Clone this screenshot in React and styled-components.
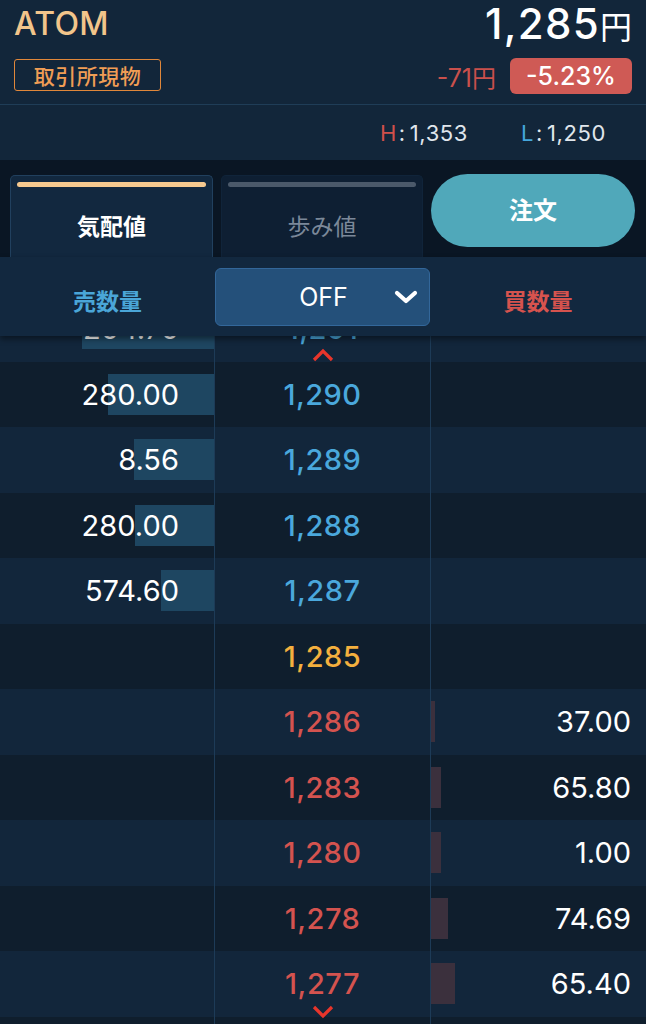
import React from "react";
import styled, { createGlobalStyle } from "styled-components";

const GlobalStyle = createGlobalStyle`
  html, body {
    margin: 0;
    padding: 0;
    background: #0b1724;
    overflow: hidden;
  }
  body {
    font-family: Inter, "Noto Sans CJK JP", sans-serif;
    -webkit-font-smoothing: antialiased;
  }
  * { box-sizing: border-box; }
`;

const Page = styled.div`
  width: 646px;
  height: 1024px;
  overflow: hidden;
  background: #0b1724;
`;

/* ---------- Header ---------- */
const Header = styled.header`
  background: #12263a;
`;

const TopRow = styled.div`
  display: flex;
  justify-content: space-between;
  height: 105px;
  padding: 0 14px;
  border-bottom: 1px solid #1f3d57;
`;

const LeftCol = styled.div`
  display: flex;
  flex-direction: column;
  align-items: flex-start;
`;

const Symbol = styled.div`
  margin-top: 4px;
  font-size: 32px;
  line-height: 40px;
  font-weight: 500;
  color: #f2c58b;
  letter-spacing: 0.3px;
`;

const MarketBadge = styled.div`
  margin-top: 15px;
  height: 32px;
  width: 147px;
  display: flex;
  align-items: center;
  justify-content: center;
  border: 1.5px solid #e0873a;
  border-radius: 3px;
  font-family: "Noto Sans CJK JP", sans-serif;
  font-size: 21px;
  font-weight: 500;
  color: #f09d55;
  letter-spacing: 0.5px;
`;

const RightCol = styled.div`
  display: flex;
  flex-direction: column;
  align-items: flex-end;
`;

const Price = styled.div`
  font-size: 42px;
  line-height: 48px;
  font-weight: 500;
  color: #ffffff;
  letter-spacing: 1.3px;
`;

const Yen = styled.span`
  font-family: "Noto Sans CJK JP", sans-serif;
  font-size: ${(p) => p.$size || 32}px;
  font-weight: 400;
  letter-spacing: 0;
`;

const ChangeRow = styled.div`
  margin-top: 9px;
  display: flex;
  align-items: center;
  gap: 14px;
`;

const Change = styled.div`
  font-size: 25px;
  color: #c9504c;
`;

const PctBadge = styled.div`
  width: 122px;
  height: 36px;
  display: flex;
  align-items: center;
  justify-content: center;
  background: #cf5a55;
  border-radius: 6px;
  color: #ffffff;
  font-size: 25px;
  font-weight: 500;
`;

const HLRow = styled.div`
  height: 55px;
  display: flex;
  justify-content: flex-end;
  align-items: center;
  gap: 53px;
  padding-right: 40px;
  font-size: 22px;
  color: #e0e6ec;
  letter-spacing: 0.6px;
`;

const HLLabel = styled.span`
  color: ${(p) => p.$color};
  margin-right: 2px;
`;

const HLColon = styled.span`
  margin-right: 4px;
`;

/* ---------- Tabs ---------- */
const TabBar = styled.div`
  display: grid;
  grid-template-columns: 203px 202px 204px;
  column-gap: 8px;
  height: 97px;
  padding: 15px 0 0 10px;
  background: #0a1624;
`;

const Tab = styled.div`
  display: flex;
  flex-direction: column;
  height: 82px;
  border-radius: 5px 5px 0 0;
  background: ${(p) => (p.$active ? "#12283f" : "#0e1f33")};
  border: 1px solid ${(p) => (p.$active ? "#21405e" : "#10243a")};
  border-bottom: none;
`;

const TabIndicator = styled.div`
  height: 5px;
  margin: 6px 6px 0;
  border-radius: 3px;
  background: ${(p) => (p.$active ? "#f6c98f" : "#4b596a")};
`;

const TabLabel = styled.div`
  flex: 1;
  display: flex;
  align-items: center;
  justify-content: center;
  padding-top: 6px;
  font-family: "Noto Sans CJK JP", sans-serif;
  font-size: 23px;
  font-weight: ${(p) => (p.$active ? 700 : 400)};
  color: ${(p) => (p.$active ? "#ffffff" : "#7b8899")};
`;

const OrderButton = styled.button`
  align-self: start;
  margin-top: -1px;
  height: 73px;
  border: none;
  border-radius: 37px;
  background: #50a8ba;
  color: #ffffff;
  font-family: "Noto Sans CJK JP", sans-serif;
  font-size: 24px;
  font-weight: 700;
  padding: 0 0 4px;
`;

/* ---------- Column header ---------- */
const ColumnHeader = styled.div`
  position: relative;
  z-index: 2;
  display: grid;
  grid-template-columns: 215px 215px 1fr;
  align-items: center;
  height: 79px;
  background: #12283f;
  box-shadow: 0 3px 6px rgba(0, 0, 0, 0.45);
`;

const HeadLabel = styled.div`
  text-align: center;
  padding-top: 6px;
  font-family: "Noto Sans CJK JP", sans-serif;
  font-size: 23px;
  font-weight: 700;
  color: ${(p) => (p.$side === "sell" ? "#4aa6d8" : "#d6534e")};
`;

const Select = styled.div`
  height: 58px;
  display: grid;
  grid-template-columns: 1fr auto 1fr;
  align-items: center;
  padding: 0 11px;
  background: #24507a;
  border: 1px solid #33679a;
  border-radius: 6px;
  color: #ffffff;
  font-size: 25px;
`;

const SelectValue = styled.span`
  grid-column: 2;
  padding-left: 2px;
`;

const SelectChevron = styled.svg`
  grid-column: 3;
  justify-self: end;
`;

/* ---------- Book ---------- */
const Book = styled.div`
  margin-top: -40px;
`;

const Row = styled.div`
  display: grid;
  grid-template-columns: 214px 217px 1fr;
  height: 65.5px;
  background: ${(p) => (p.$alt ? "#0f1e2d" : "#12263b")};
`;

const QtyCell = styled.div`
  position: relative;
  display: flex;
  align-items: center;
  justify-content: flex-end;
  padding-right: ${(p) => (p.$side === "sell" ? 35 : 15)}px;
  font-size: 29px;
  color: #ffffff;
`;

const Bar = styled.div`
  position: absolute;
  top: 12px;
  bottom: 12.5px;
  ${(p) => (p.$side === "sell" ? "right: 0;" : "left: 0;")}
  background: ${(p) => (p.$side === "sell" ? "#1e4661" : "#3b303d")};
`;

const QtyText = styled.span`
  position: relative;
`;

const PriceCell = styled.div`
  position: relative;
  display: flex;
  align-items: center;
  justify-content: center;
  border-left: 1px solid #1d3b57;
  border-right: 1px solid #1d3b57;
  font-size: 29px;
  font-weight: 500;
  letter-spacing: 0.5px;
  color: ${(p) =>
    p.$tone === "ask" ? "#4aa8dc" : p.$tone === "last" ? "#f4b03e" : "#d4534f"};
`;

const ScrollHint = styled.svg`
  position: absolute;
  z-index: 3;
  left: 50%;
  margin-left: -12px;
  ${(p) => (p.$dir === "up" ? "bottom: 0;" : "bottom: -2px;")}
`;

const Chevron = ({ dir }) => (
  <ScrollHint $dir={dir} width="24" height="14" viewBox="0 0 24 14">
    <polyline
      points={dir === "up" ? "3,12 12,3 21,12" : "3,2 12,11 21,2"}
      fill="none"
      stroke="#e8352b"
      strokeWidth="3.2"
    />
  </ScrollHint>
);

const rows = [
  { price: "1,291", tone: "ask", sell: "204.70", sellW: 132, hint: "up" },
  { price: "1,290", tone: "ask", sell: "280.00", sellW: 106 },
  { price: "1,289", tone: "ask", sell: "8.56", sellW: 80 },
  { price: "1,288", tone: "ask", sell: "280.00", sellW: 79 },
  { price: "1,287", tone: "ask", sell: "574.60", sellW: 53 },
  { price: "1,285", tone: "last" },
  { price: "1,286", tone: "bid", buy: "37.00", buyW: 4 },
  { price: "1,283", tone: "bid", buy: "65.80", buyW: 10 },
  { price: "1,280", tone: "bid", buy: "1.00", buyW: 10 },
  { price: "1,278", tone: "bid", buy: "74.69", buyW: 17 },
  { price: "1,277", tone: "bid", buy: "65.40", buyW: 24, hint: "down" },
  { price: "", tone: "bid" },
];

export default function App() {
  return (
    <Page>
      <GlobalStyle />
      <Header>
        <TopRow>
          <LeftCol>
            <Symbol>ATOM</Symbol>
            <MarketBadge>取引所現物</MarketBadge>
          </LeftCol>
          <RightCol>
            <Price>
              1,285<Yen>円</Yen>
            </Price>
            <ChangeRow>
              <Change>
                -71<Yen $size={24}>円</Yen>
              </Change>
              <PctBadge>-5.23%</PctBadge>
            </ChangeRow>
          </RightCol>
        </TopRow>
        <HLRow>
          <span>
            <HLLabel $color="#d0504b">H</HLLabel>
            <HLColon>:</HLColon>1,353
          </span>
          <span>
            <HLLabel $color="#45a7dd">L</HLLabel>
            <HLColon>:</HLColon>1,250
          </span>
        </HLRow>
      </Header>

      <TabBar>
        <Tab $active>
          <TabIndicator $active />
          <TabLabel $active>気配値</TabLabel>
        </Tab>
        <Tab>
          <TabIndicator />
          <TabLabel>歩み値</TabLabel>
        </Tab>
        <OrderButton>注文</OrderButton>
      </TabBar>

      <ColumnHeader>
        <HeadLabel $side="sell">売数量</HeadLabel>
        <Select>
          <SelectValue>OFF</SelectValue>
          <SelectChevron width="24" height="16" viewBox="0 0 24 16">
            <polyline
              points="3,4 12,12 21,4"
              fill="none"
              stroke="#ffffff"
              strokeWidth="4.2"
              strokeLinecap="round"
              strokeLinejoin="round"
            />
          </SelectChevron>
        </Select>
        <HeadLabel $side="buy">買数量</HeadLabel>
      </ColumnHeader>

      <Book>
        {rows.map((r, i) => (
          <Row key={i} $alt={i % 2 === 1}>
            <QtyCell $side="sell">
              {r.sell && <Bar $side="sell" style={{ width: r.sellW }} />}
              {r.sell && <QtyText>{r.sell}</QtyText>}
            </QtyCell>
            <PriceCell $tone={r.tone}>
              {r.price}
              {r.hint && <Chevron dir={r.hint} />}
            </PriceCell>
            <QtyCell $side="buy">
              {r.buy && <Bar $side="buy" style={{ width: r.buyW }} />}
              {r.buy && <QtyText>{r.buy}</QtyText>}
            </QtyCell>
          </Row>
        ))}
      </Book>
    </Page>
  );
}
